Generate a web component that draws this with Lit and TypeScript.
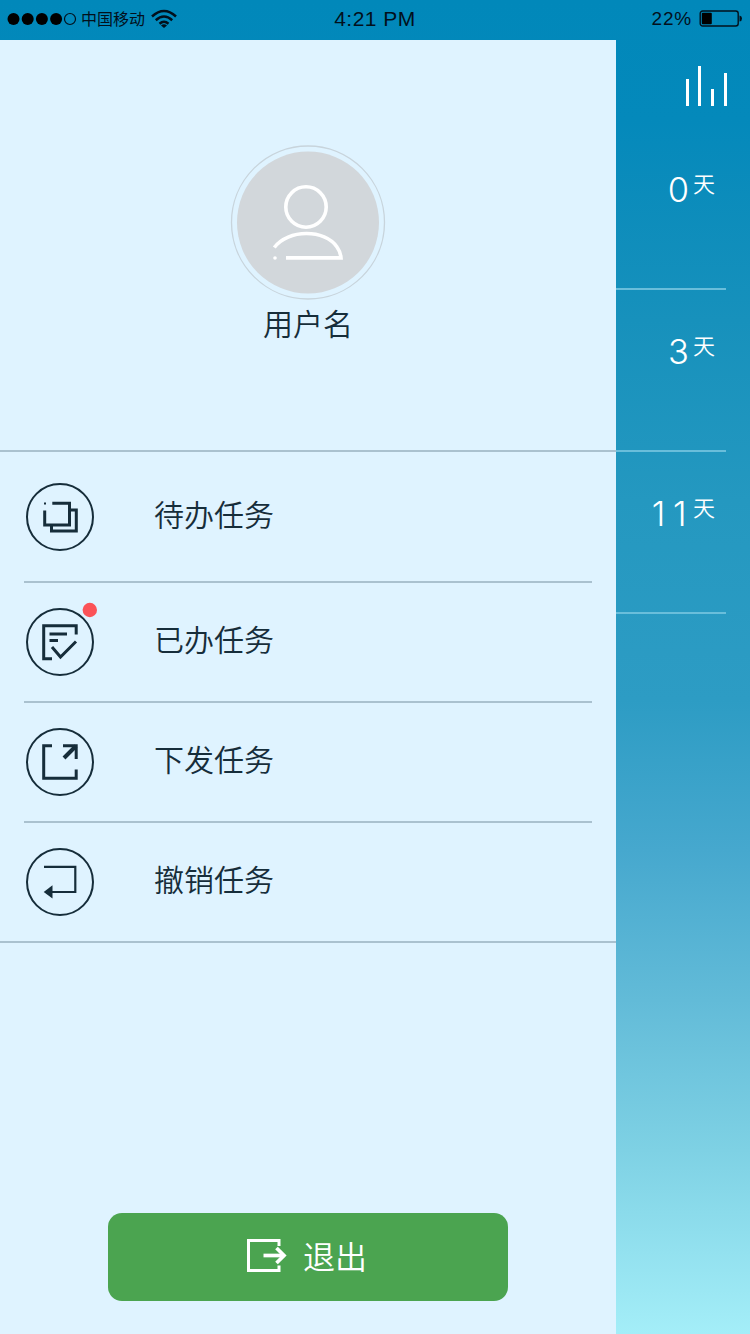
import { LitElement, html, css, svg } from "lit";
import { customElement, property } from "lit/decorators.js";

const glyphs: Record<string, unknown> = {
  pending: svg`<g fill="none" stroke="currentColor" stroke-width="3">
    <path d="M27.3 21.3H44.5V43H19.7V28.5"/><path d="M44.5 28H51.3V49H26.5V43"/></g>
    <rect x="19" y="20.5" width="2" height="2" fill="currentColor"/>`,
  done: svg`<g fill="none" stroke="currentColor" stroke-width="3">
    <path d="M51.2 27.5V18.7H18.7V51.7H27"/><path d="M24.5 27H42M24.5 33.5H33"/><path d="M27 40L35.5 50L51 34.5"/></g>`,
  issue: svg`<g fill="none" stroke="currentColor" stroke-width="3">
    <path d="M27 18.7H18.7V51.3H51.2V42.5"/><path stroke-width="4" d="M39 31L51 19"/><path d="M38 18.7H51.2V32"/></g>`,
  revoke: svg`<path fill="none" stroke="currentColor" stroke-width="2.2" d="M19 19.8H50.3V45H26"/>
    <path fill="currentColor" d="M18.7 45L27.5 38.3V51.5Z"/>`,
};

@customElement("status-bar")
export class StatusBar extends LitElement {
  static styles = css`
    :host { display: grid; grid-template-columns: 1fr auto 1fr; align-items: center; height: 40px; padding-bottom: 2px; box-sizing: border-box;
      color: #02101c; font-family: "Liberation Sans", "Noto Sans CJK SC", sans-serif; }
    .left { display: flex; align-items: center; padding-left: 7px; height: 38px; }
    .signal { width: 70px; height: 14px; }
    .carrier { font: 400 16px/24px "Noto Sans CJK SC", sans-serif; margin: -2px 0 0 4px; }
    .wifi { width: 27px; height: 20px; margin-left: 6px; }
    .time { font-size: 21px; line-height: 38px; letter-spacing: 0.5px; }
    .right { display: flex; justify-content: flex-end; align-items: center; padding-right: 7px; }
    .percent { font-size: 19px; line-height: 38px; letter-spacing: 0.8px; }
    .battery { width: 44px; height: 17px; margin: -1px 0 0 7px; }
    svg { display: block; flex: none; }
  `;
  render() {
    return html`
      <div class="left">
        <svg class="signal" viewBox="0 0 70 14">
          ${[0, 1, 2, 3].map((i) => svg`<circle cx=${6.5 + i * 14.2} cy="7" r="6"/>`)}
          <circle cx="63" cy="7" r="5.5" fill="none" stroke="#02101c" stroke-width="1.2"/>
        </svg>
        <span class="carrier">中国移动</span>
        <svg class="wifi" viewBox="0 0 27 20" fill="none" stroke="#02101c" stroke-width="2.5">
          <path d="M1 7.5Q13 -3.5 25 7.5"/><path d="M4.8 11.2Q13 3.8 21.2 11.2"/>
          <path d="M8.5 14.7Q13 10.8 17.5 14.7"/><path d="M10 16.5Q13 14.2 16 16.5L13 19Z" fill="#02101c" stroke="none"/>
        </svg>
      </div>
      <div class="time">4:21 PM</div>
      <div class="right">
        <span class="percent">22%</span>
        <svg class="battery" viewBox="0 0 44 17">
          <rect x="1.2" y="1" width="38" height="15" rx="2.5" fill="none" stroke="#02101c" stroke-width="1.4"/>
          <rect x="2.8" y="2.8" width="10" height="11.4" rx="1" fill="#000"/>
          <path d="M40.5 5.5Q43 6 43 8.5T40.5 11.5Z" fill="#02101c"/>
        </svg>
      </div>`;
  }
}

@customElement("task-item")
export class TaskItem extends LitElement {
  @property() icon = "pending";
  @property() label = "";
  @property({ type: Boolean }) unread = false;
  static styles = css`
    :host { display: flex; align-items: center; height: 100%; color: #162d3a; }
    .badge-wrap { position: relative; width: 70px; height: 70px; margin-left: 25px; }
    .icon { display: block; width: 70px; height: 70px; }
    .dot { position: absolute; left: 57px; top: -5px; width: 16px; height: 16px; }
    .label { margin: -8px 0 0 59px; font: 350 30px/44px "Noto Sans CJK SC", sans-serif; }
  `;
  render() {
    return html`<div class="badge-wrap">
        <svg class="icon" viewBox="0 0 70 70">
          <circle cx="35" cy="35" r="33" fill="none" stroke="currentColor" stroke-width="2"/>${glyphs[this.icon]}
        </svg>
        ${this.unread ? html`<svg class="dot" viewBox="0 0 16 16"><circle cx="7.8" cy="8" r="7.2" fill="#fb5257"/></svg>` : ""}
      </div><span class="label">${this.label}</span>`;
  }
}

@customElement("app-root")
export class AppRoot extends LitElement {
  static styles = css`
    :host { display: block; width: 750px; height: 1334px; overflow: hidden;
      font-family: "Noto Sans CJK SC", sans-serif;
      background: linear-gradient(#0188ba 0, #0489bb 120px, #1791bc 320px, #2498c0 500px, #2d9cc4 700px, #46a8ce 850px, #62bbd8 1000px, #7ed1e4 1150px, #a4eef8 1334px); }
    .body { display: flex; height: 1294px; }
    .drawer { width: 616px; display: flex; flex-direction: column; background: #dff3ff; }
    .profile { height: 410px; box-sizing: content-box; border-bottom: 2px solid #aac1cf; display: flex; flex-direction: column; align-items: center; }
    .avatar { width: 156px; height: 156px; margin-top: 105px; display: block; flex: none; }
    .name { font: 350 30px/44px "Noto Sans CJK SC", sans-serif; color: #162d3a; margin-top: -1px; }
    .row { height: 118px; border-bottom: 2px solid #aac1cf; margin: 0 24px; }
    .row task-item { margin-left: -24px; }
    .row.first { height: 128px; padding-top: 1px; }
    .row.last { margin: 0; }
    .row.last task-item { margin-left: 0; }
    .logout { margin: auto 108px 33px; height: 88px; border: 0; border-radius: 14px; background: #4ba450; color: #fff;
      display: flex; align-items: center; justify-content: center; padding: 0 3px 4px 0; box-sizing: border-box; font: 350 32px/44px "Noto Sans CJK SC", sans-serif; }
    .exit { width: 41px; height: 36px; margin-right: 16px; }
    .side { width: 134px; display: flex; flex-direction: column; color: #fff; }
    .bars { width: 42px; height: 41px; margin: 26px 0 0 69px; display: block; flex: none; }
    .stat { height: 160px; margin-right: 24px; border-bottom: 2px solid #69bedb; display: flex; justify-content: flex-end; align-items: flex-start; }
    .stat.top { height: 181px; }
    .count { font: 300 34.5px/48px Inter, "Open Sans", sans-serif; margin-top: 38px; }
    .top .count { margin-top: 59px; }
    .count.spaced { letter-spacing: 7.5px; margin-right: -5px; }
    .unit { font: 350 22px/32px "Noto Sans CJK SC", sans-serif; margin: 38px 11px 0 4px; }
    .top .unit { margin-top: 59px; }
  `;
  private tasks = [
    { icon: "pending", label: "待办任务", cls: "first" },
    { icon: "done", label: "已办任务", cls: "", unread: true },
    { icon: "issue", label: "下发任务", cls: "" },
    { icon: "revoke", label: "撤销任务", cls: "last" },
  ];
  render() {
    return html`<status-bar></status-bar>
      <div class="body">
        <div class="drawer">
          <div class="profile">
            <svg class="avatar" viewBox="0 0 156 156">
              <circle cx="78" cy="77.5" r="76.5" fill="none" stroke="#c8d4dc" stroke-width="1.3"/>
              <circle cx="78" cy="77.5" r="71" fill="#d2d7db"/>
              <g fill="none" stroke="#fff" stroke-width="3.6">
                <circle cx="76" cy="62" r="20.2"/>
                <path d="M44.3 102.5C58 84 95 84 107 102Q110.5 107 111 112.9H56"/>
              </g>
              <circle cx="45" cy="113" r="1.8" fill="#fff"/>
            </svg>
            <div class="name">用户名</div>
          </div>
          ${this.tasks.map((t) => html`<div class="row ${t.cls}">
            <task-item .icon=${t.icon} .label=${t.label} .unread=${!!t.unread}></task-item></div>`)}
          <button class="logout">
            <svg class="exit" viewBox="0 0 41 36" fill="none" stroke="#fff" stroke-width="3">
              <path d="M33 9V3.5H2.5V33.5H33V28.5"/><path stroke-width="3.7" d="M17.5 18.5H38"/><path stroke-width="3.7" d="M30.5 11L38 18.5L30.5 26"/>
            </svg><span>退出</span>
          </button>
        </div>
        <div class="side">
          <svg class="bars" viewBox="0 0 42 41" fill="#fff">
            <rect x="1" y="13" width="3" height="27"/><rect x="13" y="0" width="3" height="40"/>
            <rect x="26" y="23" width="3" height="17"/><rect x="39" y="7" width="3" height="33"/>
          </svg>
          <div class="stat top"><span class="count">0</span><span class="unit">天</span></div>
          <div class="stat"><span class="count">3</span><span class="unit">天</span></div>
          <div class="stat"><span class="count spaced">11</span><span class="unit">天</span></div>
        </div>
      </div>`;
  }
}
